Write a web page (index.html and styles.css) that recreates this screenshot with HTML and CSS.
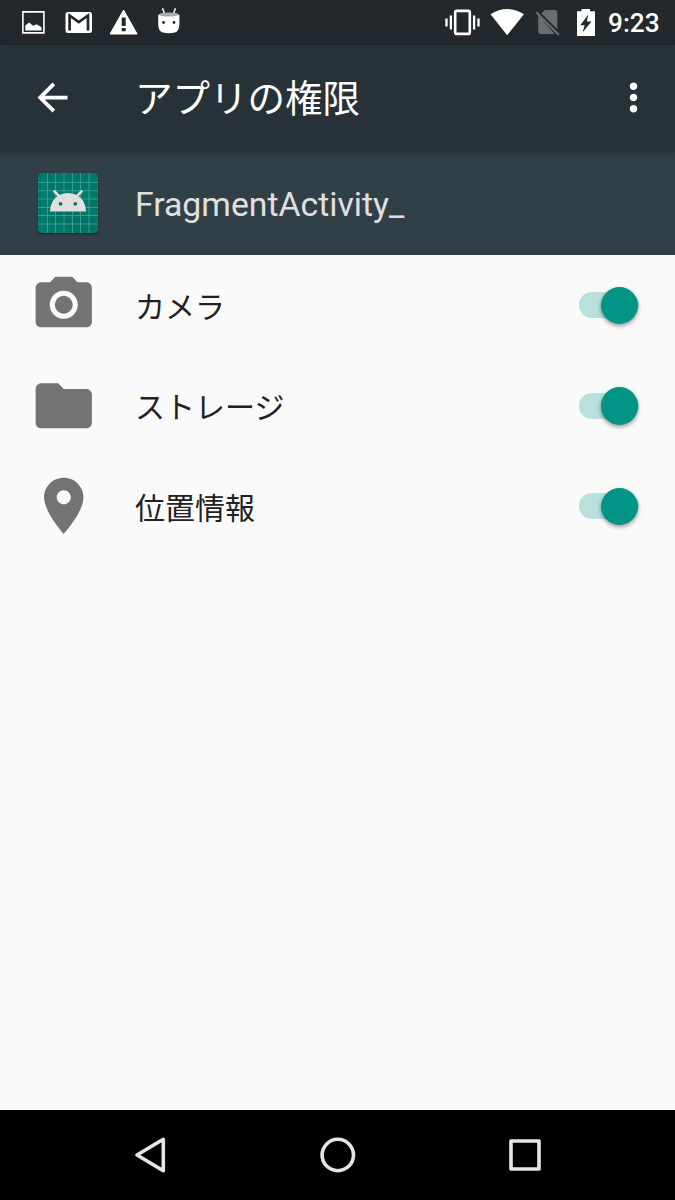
FILE: index.html
```html
<!DOCTYPE html>
<html lang="ja">
<head>
<meta charset="utf-8">
<title>アプリの権限</title>
<link rel="stylesheet" href="styles.css">
</head>
<body>
<div class="screen">
  <header class="status-bar">
    <div class="notifications">
      <svg class="status-icon" viewBox="11 0 45 45"><path fill="none" stroke="#fff" stroke-width="1.6" d="M22.9 11.900h21v21h-21z"/><path fill="#fff" d="M25.300 30.500V25.500l3.800-3 4.100 3.200 3.500-1.500 4.800 3v3.300z"/></svg>
      <svg class="status-icon" viewBox="56 0 45 45"><rect x="65.500" y="12" width="26.500" height="21" rx="2.500" fill="#fff"/><path fill="none" stroke="#22282b" stroke-width="2.700" d="M69.600 30.500V15.500l9.200 6.500 9.200-6.500v15"/></svg>
      <svg class="status-icon" viewBox="101 0 45 45"><path fill="#fff" stroke="#fff" stroke-width="1" stroke-linejoin="round" d="M123.600 10l13.500 24h-27z"/><path fill="#22282b" d="M121.700 17.500h4v8.500h-4zM121.700 28h4v3.200h-4z"/></svg>
      <svg class="status-icon" viewBox="146 0 45 45"><path stroke="#eee" stroke-width="1.600" stroke-linecap="round" d="M162.800 8.800l1.500 4.500M175.200 8.800l-1.500 4.500"/><path fill="#fff" d="M158.200 15q10.500-3.500 21.200 0v9.500q-.5 7-4.600 8-6 1.300-12 0-4.200-1-4.600-8z"/><ellipse cx="168.800" cy="14.500" rx="10" ry="2.100" fill="#aaa"/><circle cx="163.600" cy="22.500" r="1.400" fill="#22282b"/><circle cx="174" cy="22.500" r="1.400" fill="#22282b"/></svg>
    </div>
    <div class="system">
      <svg class="vibrate" viewBox="444 0 38 45"><rect x="455.200" y="10.900" width="14.600" height="23" rx="1.500" fill="none" stroke="#fff" stroke-width="2.600"/><path stroke="#fff" stroke-width="2.300" d="M450.900 15.500v14M446.500 18.500v8M474.100 15.500v14M478.500 18.500v8"/></svg>
      <svg class="wifi" viewBox="489 0 37 45"><path fill="#fff" d="M507.200 35.200L490.500 14.300q16.700-10.500 33.400 0z"/></svg>
      <svg class="sim" viewBox="534 0 28 45"><path fill="#696d6f" d="M545 10h10q2.300 0 2.300 2.300v21.600H540.500q-2.300 0-2.300-2.300V16.500z"/><path fill="#22282b" d="M534 10h4l24 24v5h-3z"/><path stroke="#696d6f" stroke-width="2.100" d="M536.200 12.200l22.800 22.900"/></svg>
      <svg class="battery" viewBox="576 0 20 45"><path fill="#fff" d="M577 11.300h4.500V9h8.500v2.300h5V36h-18z"/><path fill="#22282b" d="M588.300 14.500l-8 10.700h4.400l-2.200 7.300 9-11h-4.700z"/></svg>
      <span class="clock">9:23</span>
    </div>
  </header>
  <div class="toolbar">
    <svg class="back" viewBox="0 0 24 24"><path fill="#fff" d="M20 11H7.830l5.590-5.590L12 4l-8 8 8 8 1.410-1.410L7.830 13H20v-2z"/></svg>
    <h1 class="title">アプリの権限</h1>
    <svg class="more" viewBox="0 0 24 24"><path fill="#fff" d="M12 8c1.100 0 2-.9 2-2s-.9-2-2-2-2 .9-2 2 .9 2 2 2zm0 2c-1.100 0-2 .9-2 2s.9 2 2 2 2-.9 2-2-.9-2-2-2zm0 6c-1.100 0-2 .9-2 2s.9 2 2 2 2-.9 2-2-.9-2-2-2z"/></svg>
  </div>
  <section class="app-header">
    <svg class="app-icon" viewBox="0 0 60 60"><rect width="60" height="60" rx="4" fill="#00796b"/><path fill="#006d60" d="M13 38l22 22h21q4 0 4-4V50L47 37z" opacity=".5"/><path stroke="#45a398" stroke-width=".8" d="M9.500 0v60M17.500 0v60M26 0v60M34.500 0v60M42.500 0v60M51 0v60M0 9.500h60M0 17.700h60M0 26h60M0 34.500h60M0 42.500h60M0 51h60"/><path stroke="#e0e0e0" stroke-width="2.600" stroke-linecap="round" d="M16.500 18.500l5 5M43.500 18.500l-5 5"/><path fill="#e0e0e0" d="M12 38.500q.8-13 10.500-17 7.500-3 15 0Q47.300 25.500 48 38.500z"/><circle cx="22.500" cy="30.800" r="1.900" fill="#00796b"/><circle cx="37.300" cy="30.800" r="1.900" fill="#00796b"/></svg>
    <span class="app-name">FragmentActivity_</span>
  </section>
  <main class="permissions">
    <div class="permission">
      <svg class="permission-icon" viewBox="0 0 24 24"><circle cx="12" cy="12" r="3.200"/><path d="M9 2L7.170 4H4c-1.100 0-2 .9-2 2v12c0 1.100.9 2 2 2h16c1.100 0 2-.9 2-2V6c0-1.100-.9-2-2-2h-3.170L15 2H9zm3 15c-2.760 0-5-2.240-5-5s2.240-5 5-5 5 2.240 5 5-2.240 5-5 5z"/></svg>
      <span class="label">カメラ</span>
      <span class="switch"><span class="thumb"></span></span>
    </div>
    <div class="permission">
      <svg class="permission-icon" viewBox="0 0 24 24"><path d="M10 4H4c-1.100 0-1.990.9-1.990 2L2 18c0 1.100.9 2 2 2h16c1.100 0 2-.9 2-2V8c0-1.100-.9-2-2-2h-8l-2-2z"/></svg>
      <span class="label">ストレージ</span>
      <span class="switch"><span class="thumb"></span></span>
    </div>
    <div class="permission">
      <svg class="permission-icon" viewBox="0 0 24 24"><path d="M12 2C8.130 2 5 5.130 5 9c0 5.250 7 13 7 13s7-7.750 7-13c0-3.870-3.130-7-7-7zm0 9.500c-1.380 0-2.500-1.120-2.500-2.500s1.120-2.500 2.500-2.500 2.500 1.120 2.500 2.500-1.120 2.500-2.500 2.500z"/></svg>
      <span class="label">位置情報</span>
      <span class="switch"><span class="thumb"></span></span>
    </div>
  </main>
  <nav class="nav-bar">
    <svg class="nav-icon" viewBox="127 1132 46 46"><path d="M163.300 1139.300v31.400L137 1155z"/></svg>
    <svg class="nav-icon" viewBox="314.500 1132 46 46"><circle cx="337.300" cy="1155" r="15.700"/></svg>
    <svg class="nav-icon" viewBox="502 1132 46 46"><rect x="511" y="1141" width="28" height="28"/></svg>
  </nav>
</div>
</body>
</html>
```
FILE: styles.css
```css
* {
  box-sizing: border-box;
}

body {
  margin: 0;
  font-family: Roboto, "Noto Sans CJK JP", sans-serif;
}

svg {
  display: block;
  flex: none;
}

.screen {
  display: flex;
  flex-direction: column;
  width: 675px;
  height: 1200px;
  background: #fafafa;
  overflow: hidden;
}

.status-bar {
  display: flex;
  justify-content: space-between;
  height: 45px;
  padding: 0 15px 0 11px;
  background: #22282b;
}

.notifications,
.system {
  display: flex;
  align-items: center;
}

.status-icon {
  width: 45px;
  height: 45px;
}

.vibrate,
.wifi,
.sim,
.battery {
  height: 45px;
}

.vibrate {
  width: 38px;
  margin-right: 7px;
}

.wifi {
  width: 37px;
  margin-right: 8px;
}

.sim {
  width: 28px;
  margin-right: 14px;
}

.battery {
  width: 20px;
  margin-right: 12px;
}

.clock {
  width: 52px;
  padding-top: 2px;
  color: #fff;
  font-size: 26.25px;
  font-weight: 500;
  line-height: 43px;
  white-space: nowrap;
}

.toolbar {
  display: flex;
  align-items: center;
  height: 107px;
  padding: 0 19px 2px 30px;
  background: #263238;
  box-shadow: 0 1px 6px rgba(0, 0, 0, 0.3);
  z-index: 1;
}

.back,
.more {
  width: 45px;
  height: 45px;
}

.title {
  flex: 1;
  margin: 0 0 0 60px;
  padding-top: 2px;
  color: #fff;
  font-size: 37.5px;
  font-weight: 400;
  line-height: 56px;
}

.app-header {
  display: flex;
  align-items: center;
  height: 103px;
  padding: 0 0 2px 37.5px;
  background: #313f46;
}

.app-icon {
  width: 60px;
  height: 60px;
  border-radius: 4px;
  box-shadow: 0 1px 2px rgba(0, 0, 0, 0.4);
}

.app-name {
  margin-left: 37.5px;
  padding-top: 4px;
  color: #e0e0e0;
  font-size: 33.75px;
  line-height: 40px;
}

.permissions {
  flex: 1;
}

.permission {
  display: flex;
  align-items: center;
  height: 100.6px;
  padding: 0 36px 0 30px;
}

.permission-icon {
  width: 67.5px;
  height: 67.5px;
  margin-bottom: 1px;
  fill: #737373;
}

.label {
  flex: 1;
  margin-left: 37.5px;
  padding-top: 5px;
  color: #212121;
  font-size: 30px;
  line-height: 44px;
}

.switch {
  display: flex;
  align-items: center;
  justify-content: flex-end;
  width: 60px;
  height: 26px;
  border-radius: 13px;
  background: #b8e0dc;
}

.thumb {
  flex: none;
  width: 37.5px;
  height: 37.5px;
  margin-right: 1px;
  border-radius: 50%;
  background: #009485;
  box-shadow: 0 2px 4px rgba(0, 0, 0, 0.4);
}

.nav-bar {
  display: flex;
  justify-content: space-between;
  align-items: center;
  height: 90px;
  padding: 0 127px;
  background: #000;
}

.nav-icon {
  width: 46px;
  height: 46px;
  fill: none;
  stroke: #e6e6e6;
  stroke-width: 3.6;
  stroke-linejoin: round;
}
```
